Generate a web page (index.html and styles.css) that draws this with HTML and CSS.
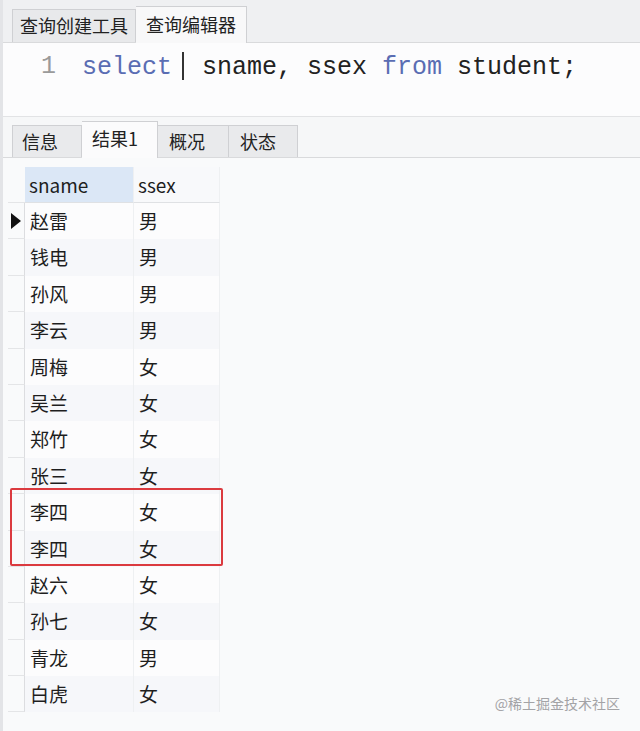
FILE: index.html
```html
<!DOCTYPE html>
<html lang="zh-CN">
<head>
<meta charset="utf-8">
<title>查询编辑器</title>
<link rel="stylesheet" href="styles.css">
</head>
<body>
<div class="app">
  <div class="top-tabs">
    <div class="tab">查询创建工具</div>
    <div class="tab active">查询编辑器</div>
  </div>
  <div class="editor">
    <span class="ln">1</span>
    <span class="code"><span class="kw">select</span> <span class="caret"></span> sname, ssex <span class="kw">from</span> student;</span>
  </div>
  <div class="gap"></div>
  <div class="result-tabs">
    <div class="rtab">信息</div>
    <div class="rtab active">结果1</div>
    <div class="rtab">概况</div>
    <div class="rtab">状态</div>
  </div>
  <div class="grid-area">
    <div class="grid">
      <div class="ind head"></div><div class="cell h sel">sname</div><div class="cell h">ssex</div>
      <div class="ind cur"><span class="tri"></span></div><div class="cell">赵雷</div><div class="cell">男</div>
      <div class="ind"></div><div class="cell s">钱电</div><div class="cell s">男</div>
      <div class="ind"></div><div class="cell">孙风</div><div class="cell">男</div>
      <div class="ind"></div><div class="cell s">李云</div><div class="cell s">男</div>
      <div class="ind"></div><div class="cell">周梅</div><div class="cell">女</div>
      <div class="ind"></div><div class="cell s">吴兰</div><div class="cell s">女</div>
      <div class="ind"></div><div class="cell">郑竹</div><div class="cell">女</div>
      <div class="ind"></div><div class="cell s">张三</div><div class="cell s">女</div>
      <div class="ind"></div><div class="cell">李四</div><div class="cell">女</div>
      <div class="ind"></div><div class="cell s">李四</div><div class="cell s">女</div>
      <div class="ind"></div><div class="cell">赵六</div><div class="cell">女</div>
      <div class="ind"></div><div class="cell s">孙七</div><div class="cell s">女</div>
      <div class="ind"></div><div class="cell">青龙</div><div class="cell">男</div>
      <div class="ind"></div><div class="cell s">白虎</div><div class="cell s">女</div>
    </div>
    <div class="highlight"></div>
  </div>
  <div class="watermark">@稀土掘金技术社区</div>
</div>
</body>
</html>
```

FILE: styles.css
```css
html, body {
  margin: 0;
  padding: 0;
}
body {
  background: #f9fafb;
  font-family: "Noto Sans CJK SC", "Noto Sans", sans-serif;
  color: #1e1e1e;
}
.app {
  position: relative;
  width: 640px;
  height: 731px;
  box-sizing: border-box;
  border-left: 3px solid #e3e4e7;
  overflow: hidden;
}
.top-tabs {
  height: 43px;
  box-sizing: border-box;
  background: #eff0f2;
  border-bottom: 1px solid #d9dadc;
  padding-left: 9px;
  display: flex;
  align-items: flex-end;
}
.tab {
  height: 33px;
  box-sizing: border-box;
  border: 1px solid #cfd0d3;
  border-bottom: none;
  background: #e8e9eb;
  padding: 0 7px;
  font-size: 18px;
  line-height: 31px;
  color: #222;
}
.tab.active {
  height: 37px;
  line-height: 35px;
  background: #f8f8f9;
  padding: 0 10px;
  border-left: none;
  margin-bottom: -1px;
}
.editor {
  height: 74px;
  box-sizing: border-box;
  background: #fcfcfd;
  border-bottom: 1px solid #e2e3e5;
  display: flex;
  align-items: flex-start;
  padding-top: 9px;
  font-family: "Liberation Mono", "Courier New", monospace;
  font-size: 25px;
  line-height: 30px;
}
.ln {
  width: 15px;
  margin-left: 38px;
  color: #9a9a9a;
}
.code {
  margin-left: 26px;
  color: #222;
  white-space: pre;
}
.kw {
  color: #5a6db3;
}
.caret {
  display: inline-block;
  width: 2px;
  height: 28px;
  background: #333;
  vertical-align: -6px;
  margin-left: -5px;
  margin-right: 3px;
}
.gap {
  height: 4px;
  background: #f6f7f8;
}
.result-tabs {
  height: 37px;
  box-sizing: border-box;
  background: #f6f7f8;
  border-bottom: 1px solid #d9dadc;
  padding-left: 9px;
  display: flex;
  align-items: flex-end;
}
.rtab {
  height: 32px;
  box-sizing: border-box;
  border: 1px solid #cfd0d3;
  border-bottom: none;
  border-left: none;
  background: #e9eaec;
  font-size: 18px;
  line-height: 31px;
  padding: 0 9px;
  color: #222;
}
.rtab:first-child {
  border-left: 1px solid #cfd0d3;
  width: 70px;
}
.rtab:nth-child(3) { width: 71px; padding-left: 11px; }
.rtab:nth-child(4) { width: 69px; padding-left: 11px; }
.rtab.active {
  height: 37px;
  line-height: 33px;
  width: 76px;
  background: #fbfbfc;
  padding-left: 10px;
  margin-bottom: -1px;
}
.grid-area {
  position: relative;
  padding-top: 9px;
}
.grid {
  display: grid;
  grid-template-columns: 22px 109px 86px;
  grid-template-rows: 36px repeat(14, 36.4px);
}
.ind {
  border-bottom: 1px solid #e4e5e7;
  border-right: 1px solid #dcdde0;
  margin-left: 5px;
  display: flex;
  align-items: center;
  justify-content: flex-end;
}
.ind.head {
  border-bottom: 1px solid #e4e5e7;
  border-right: none;
}
.tri {
  width: 0;
  height: 0;
  border-top: 8px solid transparent;
  border-bottom: 8px solid transparent;
  border-left: 10px solid #111;
  margin-right: 3px;
}
.cell {
  font-size: 19px;
  line-height: 36px;
  padding-left: 5px;
  border-right: 1px solid #eef0f2;
  background: #fcfcfd;
  white-space: nowrap;
}
.cell.h {
  background: #f8f9fb;
  border-bottom: 1px solid #dfe1e4;
  padding-left: 4px;
}
.cell.h.sel {
  background: #dbe7f6;
}
.cell.s {
  background: #f6f7fa;
}
.highlight {
  position: absolute;
  left: 7px;
  top: 330px;
  width: 209px;
  height: 74px;
  border: 2px solid #db3a3f;
  border-radius: 2px;
}
.watermark {
  position: absolute;
  right: 20px;
  bottom: 18px;
  font-size: 14px;
  color: #a3a3a6;
}
```
